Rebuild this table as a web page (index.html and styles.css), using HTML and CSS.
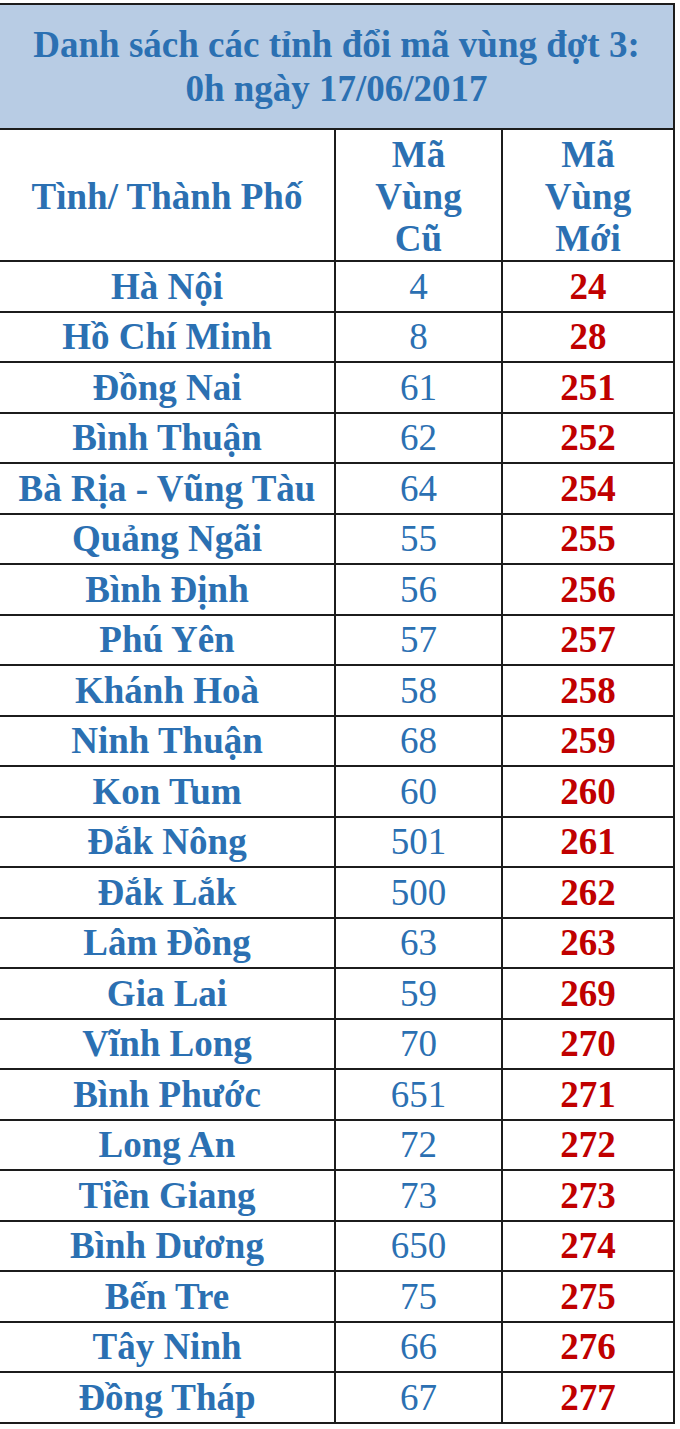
FILE: index.html
```html
<!DOCTYPE html>
<html lang="vi">
<head>
<meta charset="utf-8">
<title>Danh sách các tỉnh đổi mã vùng đợt 3</title>
<link rel="stylesheet" href="styles.css">
</head>
<body>
<div class="page">
<table class="codes">
  <colgroup>
    <col class="c1">
    <col class="c2">
    <col class="c3">
  </colgroup>
  <thead>
    <tr><th colspan="3" class="title">Danh sách các tỉnh đổi mã vùng đợt 3:<br>0h ngày 17/06/2017</th></tr>
    <tr class="head">
      <th>Tình/ Thành Phố</th>
      <th>Mã<br>Vùng<br>Cũ</th>
      <th>Mã<br>Vùng<br>Mới</th>
    </tr>
  </thead>
  <tbody>
    <tr><td class="name">Hà Nội</td><td class="old">4</td><td class="new">24</td></tr>
    <tr><td class="name">Hồ Chí Minh</td><td class="old">8</td><td class="new">28</td></tr>
    <tr><td class="name">Đồng Nai</td><td class="old">61</td><td class="new">251</td></tr>
    <tr><td class="name">Bình Thuận</td><td class="old">62</td><td class="new">252</td></tr>
    <tr><td class="name">Bà Rịa - Vũng Tàu</td><td class="old">64</td><td class="new">254</td></tr>
    <tr><td class="name">Quảng Ngãi</td><td class="old">55</td><td class="new">255</td></tr>
    <tr><td class="name">Bình Định</td><td class="old">56</td><td class="new">256</td></tr>
    <tr><td class="name">Phú Yên</td><td class="old">57</td><td class="new">257</td></tr>
    <tr><td class="name">Khánh Hoà</td><td class="old">58</td><td class="new">258</td></tr>
    <tr><td class="name">Ninh Thuận</td><td class="old">68</td><td class="new">259</td></tr>
    <tr><td class="name">Kon Tum</td><td class="old">60</td><td class="new">260</td></tr>
    <tr><td class="name">Đắk Nông</td><td class="old">501</td><td class="new">261</td></tr>
    <tr><td class="name">Đắk Lắk</td><td class="old">500</td><td class="new">262</td></tr>
    <tr><td class="name">Lâm Đồng</td><td class="old">63</td><td class="new">263</td></tr>
    <tr><td class="name">Gia Lai</td><td class="old">59</td><td class="new">269</td></tr>
    <tr><td class="name">Vĩnh Long</td><td class="old">70</td><td class="new">270</td></tr>
    <tr><td class="name">Bình Phước</td><td class="old">651</td><td class="new">271</td></tr>
    <tr><td class="name">Long An</td><td class="old">72</td><td class="new">272</td></tr>
    <tr><td class="name">Tiền Giang</td><td class="old">73</td><td class="new">273</td></tr>
    <tr><td class="name">Bình Dương</td><td class="old">650</td><td class="new">274</td></tr>
    <tr><td class="name">Bến Tre</td><td class="old">75</td><td class="new">275</td></tr>
    <tr><td class="name">Tây Ninh</td><td class="old">66</td><td class="new">276</td></tr>
    <tr><td class="name">Đồng Tháp</td><td class="old">67</td><td class="new">277</td></tr>
  </tbody>
</table>
</div>
</body>
</html>
```

FILE: styles.css
```css
html, body {
  margin: 0;
  padding: 0;
  background: #ffffff;
}

.page {
  padding-top: 3px;
  width: 680px;
}

.codes {
  border-collapse: collapse;
  width: 674px;
  table-layout: fixed;
  font-family: "Liberation Serif", "Times New Roman", serif;
  color: #2b70b2;
  border-top: 2px solid #1c1c1c;
  border-right: 2px solid #1c1c1c;
  border-bottom: 2px solid #1c1c1c;
}

.c1 { width: 335px; }
.c2 { width: 167px; }
.c3 { width: 172px; }

.codes th,
.codes td {
  border: 2px solid #1c1c1c;
  text-align: center;
  padding: 0;
}

.codes tr > :first-child {
  border-left: none;
}

.title {
  background: #b8cce4;
  font-size: 37px;
  font-weight: bold;
  line-height: 44px;
  height: 123px;
  padding-top: 4px;
}

.head th {
  font-size: 37px;
  font-weight: bold;
  line-height: 42px;
  height: 127px;
  padding-top: 3px;
}

.codes td {
  height: 48.5px;
  font-size: 37px;
  line-height: 1;
}

.name {
  font-weight: bold;
}

.old {
  font-weight: normal;
}

.new {
  font-weight: bold;
  color: #c00000;
}
```
